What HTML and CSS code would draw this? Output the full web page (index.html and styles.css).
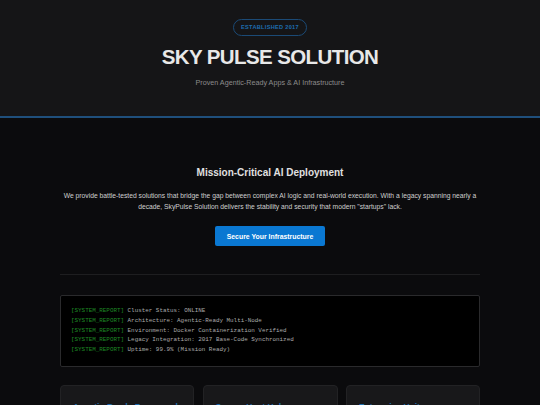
FILE: index.html
```html
<!DOCTYPE html>
<html>
<head>
<meta charset="utf-8">
<link rel="stylesheet" href="styles.css">
</head>
<body>
<header class="hero">
  <div class="badge">ESTABLISHED 2017</div>
  <h1 class="title">SKY PULSE SOLUTION</h1>
  <p class="subtitle">Proven Agentic-Ready Apps &amp; AI Infrastructure</p>
</header>
<main class="main">
  <section class="intro">
    <h2 class="intro-title">Mission-Critical AI Deployment</h2>
    <p class="intro-text">We provide battle-tested solutions that bridge the gap between complex AI logic and real-world execution. With a legacy spanning nearly a decade, SkyPulse Solution delivers the stability and security that modern "startups" lack.</p>
    <a class="cta" href="#">Secure Your Infrastructure</a>
  </section>
  <div class="terminal">
    <div class="line"><span class="tag">[SYSTEM_REPORT]</span> Cluster Status: ONLINE</div>
    <div class="line"><span class="tag">[SYSTEM_REPORT]</span> Architecture: Agentic-Ready Multi-Node</div>
    <div class="line"><span class="tag">[SYSTEM_REPORT]</span> Environment: Docker Containerization Verified</div>
    <div class="line"><span class="tag">[SYSTEM_REPORT]</span> Legacy Integration: 2017 Base-Code Synchronized</div>
    <div class="line"><span class="tag">[SYSTEM_REPORT]</span> Uptime: 99.9% (Mission Ready)</div>
  </div>
  <div class="cards">
    <div class="card"><h3 class="card-title">Agentic-Ready Framework</h3><p class="card-text">Systems engineered for autonomous agents and scalable AI workflows.</p></div>
    <div class="card"><h3 class="card-title">Secure Host Hub</h3><p class="card-text">Hardened hosting environments built for sensitive workloads.</p></div>
    <div class="card"><h3 class="card-title">Enterprise Unity</h3><p class="card-text">Legacy-compatible integration across your entire stack.</p></div>
  </div>
</main>
</body>
</html>
```
FILE: styles.css
```css
* { box-sizing: border-box; }
html, body { margin: 0; padding: 0; }
body {
  background: #0b0b0d;
  font-family: "Liberation Sans", Arial, sans-serif;
  color: #d0d0d0;
}
.hero {
  background: #151517;
  border-bottom: 2px solid #1f4f7c;
  padding: 19px 0 29px;
  display: flex;
  flex-direction: column;
  align-items: center;
}
.badge {
  border: 1px solid #1b4a76;
  border-radius: 10px;
  color: #1d6db0;
  font-size: 5.6px;
  font-weight: bold;
  letter-spacing: 0.3px;
  padding: 4px 7px;
  line-height: 7px;
}
.title {
  margin: 9px 0 0;
  font-size: 20.5px;
  letter-spacing: -0.6px;
  line-height: 24px;
  color: #e8e8e8;
  font-weight: bold;
}
.subtitle {
  margin: 9px 0 0;
  font-size: 7.2px;
  color: #8c8c8c;
  line-height: 9px;
}
.main {
  width: 420px;
  margin: 0 auto;
}
.intro {
  display: flex;
  flex-direction: column;
  align-items: center;
  padding: 48px 0 28px;
  border-bottom: 1px solid #1e1e20;
}
.intro-title {
  margin: 0;
  font-size: 10px;
  line-height: 14px;
  color: #e0e0e0;
}
.intro-text {
  margin: 10px 0 0;
  width: 420px;
  text-align: center;
  font-size: 6.75px;
  line-height: 11px;
  color: #cfcfcf;
}
.cta {
  margin-top: 14px;
  background: #0a78d2;
  color: #fff;
  text-decoration: none;
  font-size: 6.9px;
  font-weight: bold;
  width: 110px;
  height: 20px;
  display: flex;
  align-items: center;
  justify-content: center;
  border-radius: 2px;
}
.terminal {
  margin-top: 20px;
  background: #000;
  border: 1px solid #2a2a2c;
  border-radius: 2px;
  padding: 10px 10px 11px;
  font-family: "Liberation Mono", "Courier New", monospace;
  font-size: 5.9px;
  color: #ababab;
}
.line { line-height: 9.8px; white-space: pre; }
.tag { color: #1f8a25; }
.cards {
  margin-top: 18px;
  display: grid;
  grid-template-columns: 134px 135px 134px;
  justify-content: space-between;
}
.card {
  background: #18181a;
  border: 1px solid #222224;
  border-radius: 4px;
  padding: 16px 12px 12px;
  height: 100px;
}
.card-title {
  margin: 0;
  color: #1d6db0;
  font-size: 8.5px;
  line-height: 11px;
  white-space: nowrap;
}
.card-text {
  margin: 6px 0 0;
  font-size: 7px;
  color: #a0a0a0;
}
```
